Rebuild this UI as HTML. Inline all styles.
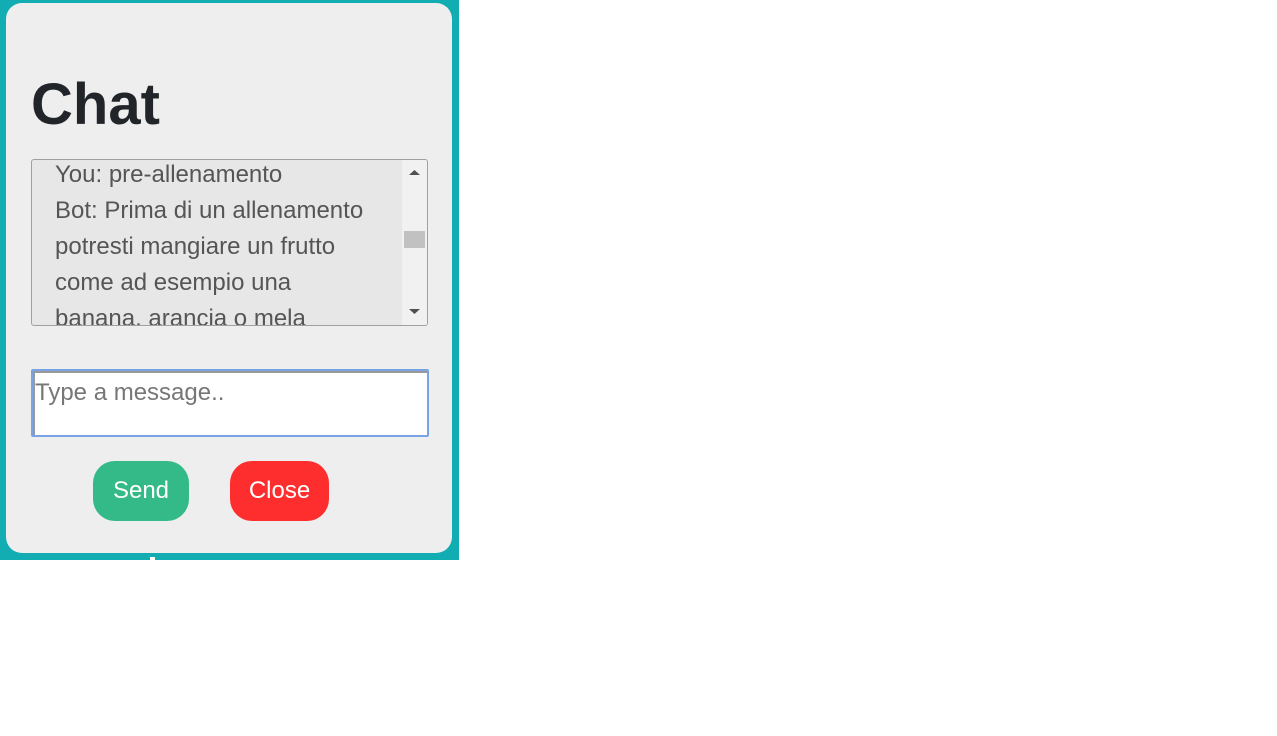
<!DOCTYPE html>
<html><head><style>
html,body{margin:0;padding:0;background:#fff;width:1277px;height:736px;overflow:hidden;font-family:"Liberation Sans",sans-serif}
.outer{position:absolute;left:0;top:0;width:459px;height:560px;background:#12acb3}
.panel{position:absolute;left:6px;top:3px;width:446px;height:550px;background:#eeeeee;border-radius:16px}
h1{position:absolute;left:31px;top:70px;margin:0;font-family:"Liberation Sans",sans-serif;font-weight:bold;font-size:58px;color:#212529;line-height:70px}
.log{position:absolute;left:31px;top:159px;width:395px;height:165px;border:1px solid #a0a0a0;border-radius:3px;background:#e7e7e7;overflow:hidden}
.log .txt{position:absolute;left:23px;top:-3px;font-size:24px;line-height:36px;color:#555}
.sb{position:absolute;right:0;top:0;width:25px;height:100%;background:#f1f1f1}
.thumb{position:absolute;left:2px;top:71px;width:21px;height:17px;background:#c1c1c1}
.input{position:absolute;left:31px;top:369px;width:394px;height:64px;background:#fff;border:2px solid #78a4e6;border-radius:2px;box-shadow:inset 2px 2px 0 #999}
.input span{position:absolute;left:2px;top:8px;font-size:24px;color:#777}
.btn{position:absolute;top:461px;height:60px;border-radius:22px;color:#fff;font-size:24px;text-align:center;line-height:60px}
</style></head><body>
<div class="outer"></div>
<div class="panel"></div>
<h1>Chat</h1>
<div class="log">
<div class="txt">You: pre-allenamento<br>Bot: Prima di un allenamento<br>potresti mangiare un frutto<br>come ad esempio una<br>banana, arancia o mela</div>
<div class="sb"><svg width="25" height="165" style="position:absolute;left:0;top:0"><path d="M7 15 L12.5 10 L18 15Z" fill="#505050"/><path d="M7 149 L12.5 154 L18 149Z" fill="#505050"/></svg><div class="thumb"></div></div>
</div>
<div class="input"><span>Type a message..</span></div>
<div class="btn" style="left:93px;width:96px;background:#34ba88">Send</div>
<div class="btn" style="left:230px;width:99px;background:#fe2e2f">Close</div>
<div style="position:absolute;left:150px;top:557px;width:5px;height:3px;background:#fff"></div>
</body></html>
